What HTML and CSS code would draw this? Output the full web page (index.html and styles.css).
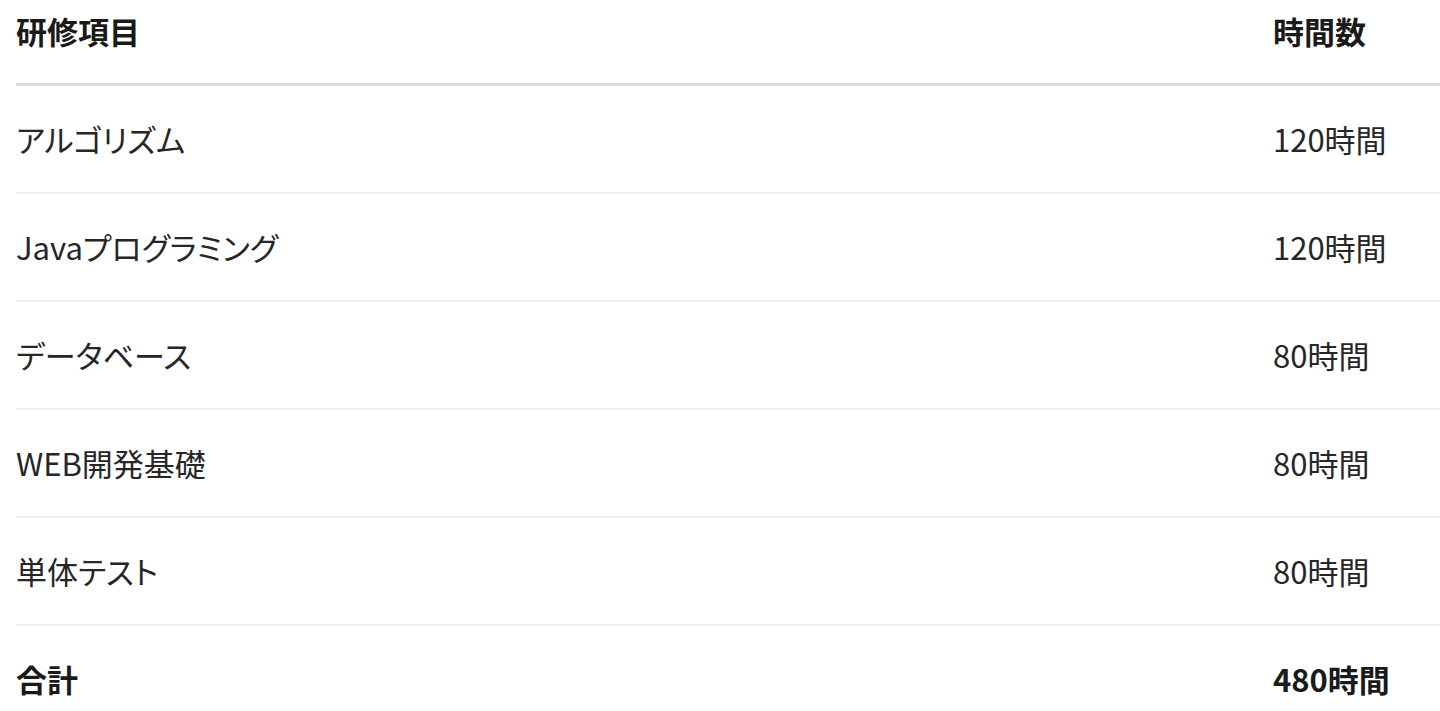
FILE: index.html
```html
<html>
<head>
    <meta charset="utf-8">
    <link rel="stylesheet" href="styles.css">
</head>
<body>
    <table class="course_table">
        <thead>
            <tr>
                <th>研修項目</th>
                <th class="hours_col">時間数</th>
            </tr>
        </thead>
        <tbody>
            <tr>
                <td>アルゴリズム</td>
                <td>120時間</td>
            </tr>
            <tr>
                <td>Javaプログラミング</td>
                <td>120時間</td>
            </tr>
            <tr>
                <td>データベース</td>
                <td>80時間</td>
            </tr>
            <tr>
                <td>WEB開発基礎</td>
                <td>80時間</td>
            </tr>
            <tr>
                <td>単体テスト</td>
                <td>80時間</td>
            </tr>
        </tbody>
        <tfoot>
            <tr>
                <td>合計</td>
                <td>480時間</td>
            </tr>
        </tfoot>
    </table>
</body>
</html>
```

FILE: styles.css
```css
html {
    box-sizing: border-box;
}

body {
    margin: 0;
    background-color: #ffffff;
    font-family: 'Noto Sans CJK JP', 'Noto Sans', sans-serif;
    font-feature-settings: "palt";
    color: #262626;
}

.course_table {
    margin-left: 16px;
    width: calc(100% - 16px);
    border-collapse: collapse;
    border-spacing: 0;
}

    .course_table th {
        text-align: left;
        font-size: 31px;
        font-weight: 700;
        line-height: 62px;
        padding: 0 0 21px 0;
        color: #1a1a1a;
        border-bottom: 3px solid #dddddd;
    }

    .course_table .hours_col {
        width: 167px;
    }

    .course_table td {
        font-size: 31px;
        line-height: 40px;
        padding: 33px 0;
        vertical-align: middle;
        border-bottom: 2px solid #f0f0f0;
    }

    .course_table tfoot td {
        font-weight: 700;
        color: #1a1a1a;
        border-bottom: none;
    }
```
